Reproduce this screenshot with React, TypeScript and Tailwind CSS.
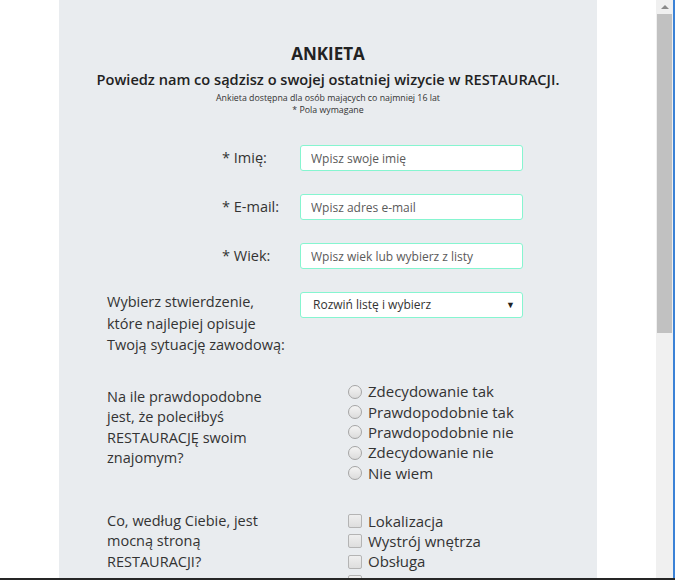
import React from "react";

const radioOptions = [
  "Zdecydowanie tak",
  "Prawdopodobnie tak",
  "Prawdopodobnie nie",
  "Zdecydowanie nie",
  "Nie wiem",
];

const checkOptions = ["Lokalizacja", "Wystrój wnętrza", "Obsługa", "Menu"];

const TextRow = ({ label, placeholder }: { label: string; placeholder: string }) => (
  <div className="flex items-center">
    <label className="w-[193px] shrink-0 pl-[115px] text-[14.5px] text-[#333]">{label}</label>
    <input
      type="text"
      placeholder={placeholder}
      className="w-[223px] h-[26px] rounded-[3px] border border-[#86f5d0] bg-white px-[10px] text-[12px] outline-none placeholder:text-[#5a5a5a]"
    />
  </div>
);

const App = () => {
  return (
    <div className="flex h-[580px] flex-col overflow-hidden bg-white font-['Open_Sans','Noto_Sans',sans-serif]">
      <div className="flex h-[578px] flex-row">
        <div className="flex-1 overflow-hidden">
          <div className="mx-auto h-full w-[538px] bg-[#e9ecef] pt-[43px]">
            <h1 className="text-center text-[17px] font-bold leading-[22px] text-[#222]">ANKIETA</h1>
            <h2 className="mt-[4px] text-center text-[14.6px] font-semibold leading-[20px] text-[#222]">
              Powiedz nam co sądzisz o swojej ostatniej wizycie w RESTAURACJI.
            </h2>
            <p className="mt-[3px] text-center text-[8.8px] leading-[12px] text-[#333]">
              Ankieta dostępna dla osób mających co najmniej 16 lat
            </p>
            <p className="text-center text-[8.8px] leading-[12px] text-[#333]">* Pola wymagane</p>

            <form className="mt-[29px] flex flex-col pl-[48px]">
              <div className="flex flex-col gap-[23px]">
                <TextRow label="* Imię:" placeholder="Wpisz swoje imię" />
                <TextRow label="* E-mail:" placeholder="Wpisz adres e-mail" />
                <TextRow label="* Wiek:" placeholder="Wpisz wiek lub wybierz z listy" />

                <div className="flex items-start">
                  <label className="-mt-[1px] w-[193px] shrink-0 text-[14.5px] leading-[21.5px] text-[#333]">
                    Wybierz stwierdzenie,
                    <br />
                    które najlepiej opisuje
                    <br />
                    Twoją sytuację zawodową:
                  </label>
                  <div className="flex h-[26px] w-[223px] items-center justify-between rounded-[3px] border border-[#86f5d0] bg-white pl-[12px] pr-[7px] text-[12px] text-[#333]">
                    <span>Rozwiń listę i wybierz</span>
                    <span className="text-[9px] text-[#222]">▼</span>
                  </div>
                </div>
              </div>

              <div className="mt-[26px] flex items-start">
                <p className="mt-[5px] w-[241px] shrink-0 text-[14.5px] leading-[20.5px] text-[#333]">
                  Na ile prawdopodobne
                  <br />
                  jest, że poleciłbyś
                  <br />
                  RESTAURACJĘ swoim
                  <br />
                  znajomym?
                </p>
                <div className="flex flex-col">
                  {radioOptions.map((opt) => (
                    <label key={opt} className="flex h-[20.3px] items-center gap-[6px] text-[15px] text-[#333]">
                      <span className="h-[14px] w-[14px] rounded-full border border-[#a5a5a5] bg-gradient-to-b from-[#f4f4f4] to-[#dcdcdc]" />
                      {opt}
                    </label>
                  ))}
                </div>
              </div>

              <div className="mt-[28px] flex items-start">
                <p className="w-[241px] shrink-0 text-[14.5px] leading-[20.5px] text-[#333]">
                  Co, według Ciebie, jest
                  <br />
                  mocną stroną
                  <br />
                  RESTAURACJI?
                </p>
                <div className="flex flex-col">
                  {checkOptions.map((opt) => (
                    <label key={opt} className="flex h-[20.3px] items-center gap-[6px] text-[15px] text-[#333]">
                      <span className="h-[14px] w-[14px] rounded-[2px] border border-[#b4b4b4] bg-gradient-to-b from-[#efefef] to-[#dedede]" />
                      {opt}
                    </label>
                  ))}
                </div>
              </div>
            </form>
          </div>
        </div>

        {/* fake window scrollbar */}
        <div className="flex w-[17px] shrink-0 flex-col items-center bg-[#f0f0f0]">
          <div className="flex h-[14px] items-center justify-center">
            <span className="h-0 w-0 border-x-[4px] border-b-[4px] border-x-transparent border-b-[#8a8a8a]" />
          </div>
          <div className="h-[319px] w-[15px] bg-[#c1c1c1]" />
        </div>
        <div className="w-[2px] shrink-0 bg-[#3b82d6]" />
      </div>
      <div className="h-[2px] bg-[#262626]" />
    </div>
  );
};

export default App;
